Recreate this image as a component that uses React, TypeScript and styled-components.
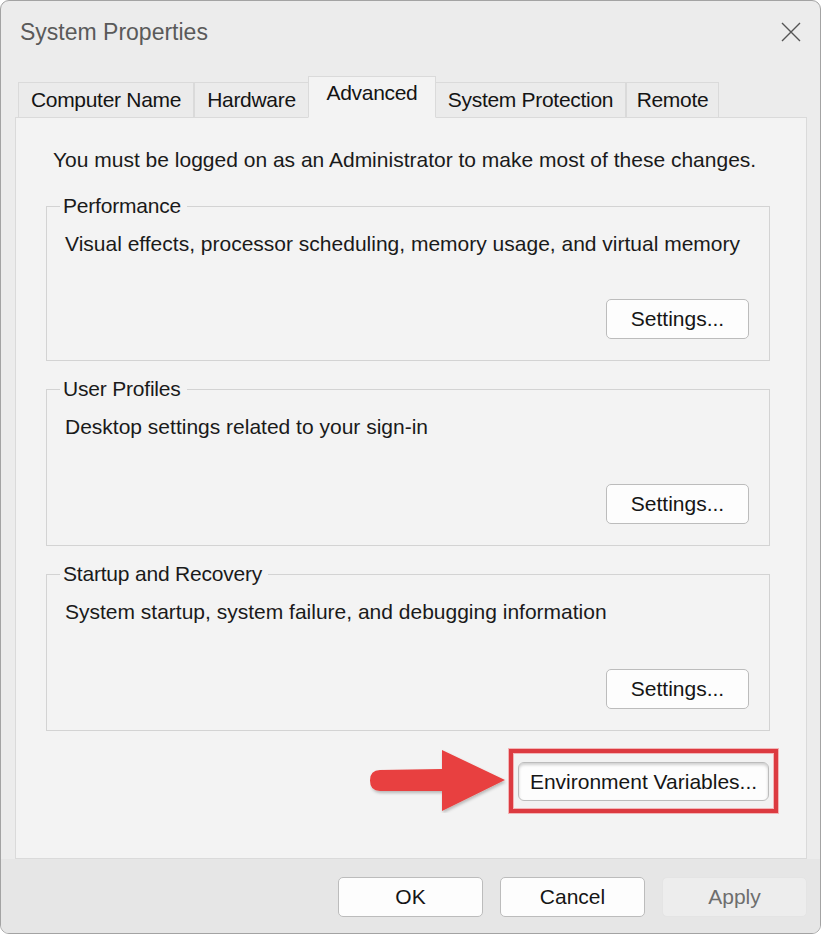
import React from "react";
import styled, { createGlobalStyle } from "styled-components";

const GlobalStyle = createGlobalStyle`
  html, body {
    margin: 0;
    padding: 0;
    background: #ffffff;
  }
  body {
    font-family: "Liberation Sans", Arial, sans-serif;
    color: #1a1a1a;
  }
`;

const Window = styled.div`
  box-sizing: border-box;
  width: 821px;
  height: 934px;
  border: 1px solid #a3a3a3;
  border-radius: 9px;
  background: #ececec;
  display: flex;
  flex-direction: column;
  overflow: hidden;
`;

const TitleBar = styled.div`
  height: 62px;
  display: flex;
  align-items: center;
  justify-content: space-between;
  padding: 0 18px 0 19px;
`;

const Title = styled.div`
  font-size: 23px;
  color: #5a5a5a;
  margin-top: 1px;
`;

const CloseButton = styled.div`
  width: 22px;
  height: 22px;
  display: flex;
  align-items: center;
  justify-content: center;
`;

const TabStrip = styled.div`
  display: flex;
  align-items: flex-end;
  padding-left: 17px;
  height: 55px;
  position: relative;
  z-index: 1;
  margin-bottom: -1px;
`;

const Tab = styled.div<{ $active?: boolean; $width: number }>`
  box-sizing: border-box;
  width: ${(p) => p.$width}px;
  height: ${(p) => (p.$active ? 42 : 36)}px;
  margin: ${(p) => (p.$active ? "0 -1px" : "0")};
  display: flex;
  align-items: center;
  justify-content: center;
  padding-bottom: ${(p) => (p.$active ? 8 : 0)}px;
  font-size: 21px;
  letter-spacing: -0.3px;
  color: #141414;
  background: ${(p) => (p.$active ? "#f3f3f3" : "#ebebeb")};
  border: 1px solid #dadada;
  border-bottom: ${(p) => (p.$active ? "1px solid #f3f3f3" : "1px solid #dadada")};
  position: relative;
  z-index: ${(p) => (p.$active ? 2 : 1)};
`;

const Panel = styled.div`
  box-sizing: border-box;
  margin: 0 14px;
  width: 792px;
  height: 742px;
  background: #f3f3f3;
  border: 1px solid #dadada;
  display: flex;
  flex-direction: column;
  padding: 30px 36px 0 30px;
`;

const Intro = styled.div`
  font-size: 21px;
  line-height: 24px;
  padding-left: 7px;
  margin-bottom: 22px;
`;

const Group = styled.fieldset`
  box-sizing: border-box;
  margin: 0;
  padding: 0 20px 21px 18px;
  border: 1px solid #d3d3d3;
  & + & {
    margin-top: 16px;
  }
`;

const Legend = styled.legend`
  font-size: 21px;
  letter-spacing: -0.2px;
  padding: 0 6px 0 3px;
  margin-left: -5px;
  line-height: 24px;
`;

const Description = styled.div`
  font-size: 21px;
  line-height: 24px;
  margin-top: 14px;
`;

const ButtonRow = styled.div<{ $gap: number }>`
  margin-top: ${(p) => p.$gap}px;
  display: flex;
  justify-content: flex-end;
`;

const Button = styled.div<{ $width?: number; $disabled?: boolean }>`
  box-sizing: border-box;
  width: ${(p) => p.$width ?? 143}px;
  height: 40px;
  border-radius: 5px;
  border: 1px solid ${(p) => (p.$disabled ? "#e4e4e4" : "#bcbcbc")};
  background: ${(p) => (p.$disabled ? "#ededed" : "#fdfdfd")};
  color: ${(p) => (p.$disabled ? "#6e6e6e" : "#151515")};
  display: flex;
  align-items: center;
  justify-content: center;
  font-size: 21px;
`;

const ActionRow = styled.div`
  display: flex;
  justify-content: flex-end;
  align-items: center;
  margin-top: 18px;
  margin-right: -8px;
`;

const Highlight = styled.div`
  box-sizing: border-box;
  padding: 9px 5px 8px 5px;
  border: 4px solid #dc3a40;
  box-shadow: 0 0 0 1px #f3b5b7, inset 0 0 0 1px #f3b5b7;
  background: #f2f2f2;
`;

const WideButton = styled(Button)`
  width: 251px;
  height: 39px;
  border-radius: 6px;
  box-shadow: inset 0 2px 3px rgba(0, 0, 0, 0.18);
`;

const Footer = styled.div`
  flex: 1;
  background: #e6e6e6;
  display: flex;
  justify-content: flex-end;
  align-items: flex-start;
  gap: 17px;
  padding: 18px 13px 0 0;
`;

const Arrow = () => (
  <svg width="140" height="64" viewBox="0 0 140 64" style={{ marginRight: -1 }}>
    <defs>
      <filter id="arrowShadow" x="-10%" y="-20%" width="130%" height="150%">
        <feDropShadow dx="1" dy="2" stdDeviation="1.5" floodColor="#000" floodOpacity="0.25" />
      </filter>
    </defs>
    <path
      d="M10 21 L72 20 L72 1 L135 31 L72 62 L72 42 L10 42 Q0 42 0 31.5 Q0 21 10 21 Z"
      fill="#e8403f"
      filter="url(#arrowShadow)"
    />
  </svg>
);

const CloseIcon = () => (
  <svg width="22" height="22" viewBox="0 0 22 22">
    <path d="M2 2 L20 20 M20 2 L2 20" stroke="#555" strokeWidth="1.4" fill="none" />
  </svg>
);

const tabs = [
  { label: "Computer Name", width: 176 },
  { label: "Hardware", width: 115 },
  { label: "Advanced", width: 128, active: true },
  { label: "System Protection", width: 191 },
  { label: "Remote", width: 93 },
];

const groups = [
  { title: "Performance", text: "Visual effects, processor scheduling, memory usage, and virtual memory", gap: 43 },
  { title: "User Profiles", text: "Desktop settings related to your sign-in", gap: 45 },
  { title: "Startup and Recovery", text: "System startup, system failure, and debugging information", gap: 45 },
];

export default function App() {
  return (
    <>
      <GlobalStyle />
      <Window>
        <TitleBar>
          <Title>System Properties</Title>
          <CloseButton>
            <CloseIcon />
          </CloseButton>
        </TitleBar>
        <TabStrip>
          {tabs.map((t) => (
            <Tab key={t.label} $active={t.active} $width={t.width}>
              {t.label}
            </Tab>
          ))}
        </TabStrip>
        <Panel>
          <Intro>You must be logged on as an Administrator to make most of these changes.</Intro>
          {groups.map((g) => (
            <Group key={g.title}>
              <Legend>{g.title}</Legend>
              <Description>{g.text}</Description>
              <ButtonRow $gap={g.gap}>
                <Button>Settings...</Button>
              </ButtonRow>
            </Group>
          ))}
          <ActionRow>
            <Arrow />
            <Highlight>
              <WideButton>Environment Variables...</WideButton>
            </Highlight>
          </ActionRow>
        </Panel>
        <Footer>
          <Button $width={145}>OK</Button>
          <Button $width={145}>Cancel</Button>
          <Button $width={145} $disabled>
            Apply
          </Button>
        </Footer>
      </Window>
    </>
  );
}
